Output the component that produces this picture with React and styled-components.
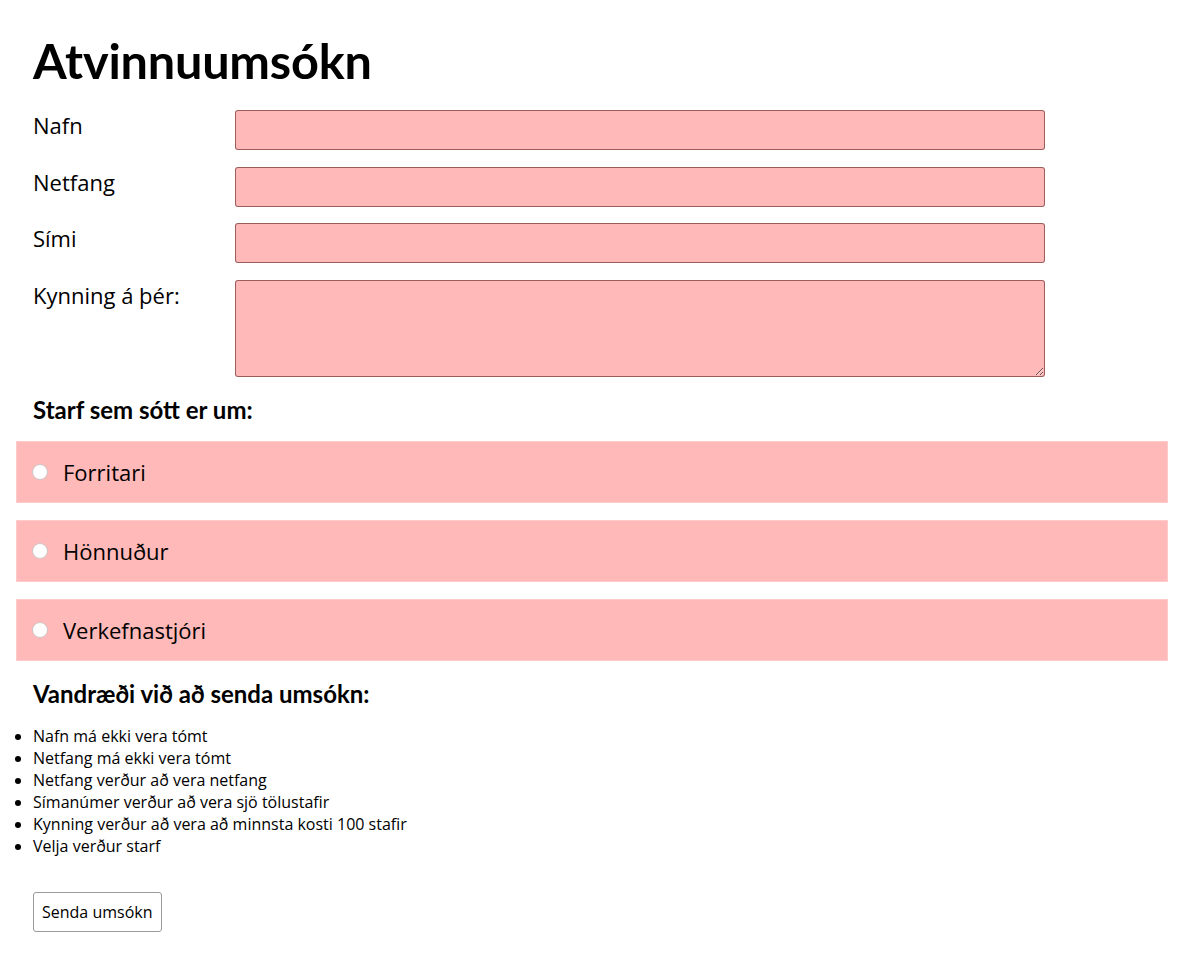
import React from "react";
import styled, { createGlobalStyle } from "styled-components";

const Global = createGlobalStyle`
  html, body { margin: 0; padding: 0; background: #fff; }
  body { font-family: "Open Sans", "Liberation Sans", sans-serif; color: #000; }
  * { box-sizing: border-box; }
`;

const Page = styled.div`
  padding: 0 32px 33px 16px;
`;

const Inner = styled.div`
  padding: 0 17px;
`;

const Title = styled.h1`
  font-family: Lato, "Open Sans", sans-serif;
  font-weight: 700;
  font-size: 48.6px;
  line-height: 1.2;
  margin: 0;
  padding-top: 31px;
  letter-spacing: -0.2px;
`;

const Grid = styled.div`
  display: grid;
  grid-template-columns: 202px 810px;
  row-gap: 16.7px;
  margin-top: 20.5px;
`;

const Label = styled.label`
  font-size: 22px;
  line-height: normal;
`;

const Input = styled.input`
  height: 40px;
  width: 100%;
  background: #ffb9b9;
  border: 1px solid rgba(60, 0, 0, 0.5);
  border-radius: 3px;
  font: inherit;
`;

const TextArea = styled.textarea`
  height: 97px;
  width: 100%;
  background: #ffb9b9;
  border: 1px solid rgba(60, 0, 0, 0.5);
  border-radius: 3px;
  font: inherit;
  display: block;
`;

const SubHeading = styled.h2`
  font-family: Lato, "Open Sans", sans-serif;
  font-weight: 700;
  font-size: 24px;
  line-height: 1.2;
  margin: ${(p) => p.$mt}px 0 ${(p) => p.$mb}px 0;
`;

const Options = styled.div`
  display: flex;
  flex-direction: column;
  gap: 17px;
`;

const OptionRow = styled.label`
  display: flex;
  align-items: center;
  gap: 15px;
  height: 62px;
  padding: 0 15px;
  background: #ffb9b9;
  border: 1px solid #ffcaca;
  font-size: 22px;
`;

const Radio = styled.input`
  appearance: none;
  -webkit-appearance: none;
  width: 16px;
  height: 16px;
  margin: 0;
  border-radius: 50%;
  background: #fff;
  border: 1px solid #cfc4c4;
  flex: none;
`;

const ErrorList = styled.ul`
  margin: 17px 0 0 0;
  padding-left: 17px;
  font-size: 16px;
  line-height: 22px;
`;

const Button = styled.button`
  margin-top: 35px;
  height: 40px;
  padding: 0 8px;
  background: #fff;
  border: 1px solid #9a9a9a;
  border-radius: 3px;
  font-family: "Open Sans", sans-serif;
  font-size: 16px;
  color: #000;
`;

const fields = [
  { id: "nafn", label: "Nafn" },
  { id: "netfang", label: "Netfang" },
  { id: "simi", label: "Sími" },
];

const jobs = ["Forritari", "Hönnuður", "Verkefnastjóri"];

const errors = [
  "Nafn má ekki vera tómt",
  "Netfang má ekki vera tómt",
  "Netfang verður að vera netfang",
  "Símanúmer verður að vera sjö tölustafir",
  "Kynning verður að vera að minnsta kosti 100 stafir",
  "Velja verður starf",
];

export default function App() {
  return (
    <>
      <Global />
      <Page>
        <Inner>
          <Title>Atvinnuumsókn</Title>
          <Grid>
            {fields.map((f) => (
              <React.Fragment key={f.id}>
                <Label htmlFor={f.id}>{f.label}</Label>
                <Input id={f.id} type="text" />
              </React.Fragment>
            ))}
            <Label htmlFor="kynning">Kynning á þér:</Label>
            <TextArea id="kynning" />
          </Grid>
          <SubHeading $mt={19} $mb={16}>Starf sem sótt er um:</SubHeading>
        </Inner>
        <Options>
          {jobs.map((j) => (
            <OptionRow key={j}>
              <Radio type="radio" name="starf" value={j} />
              {j}
            </OptionRow>
          ))}
        </Options>
        <Inner>
          <SubHeading $mt={19} $mb={0}>Vandræði við að senda umsókn:</SubHeading>
        </Inner>
        <ErrorList>
          {errors.map((e) => (
            <li key={e}>{e}</li>
          ))}
        </ErrorList>
        <Inner>
          <Button type="button">Senda umsókn</Button>
        </Inner>
      </Page>
    </>
  );
}
